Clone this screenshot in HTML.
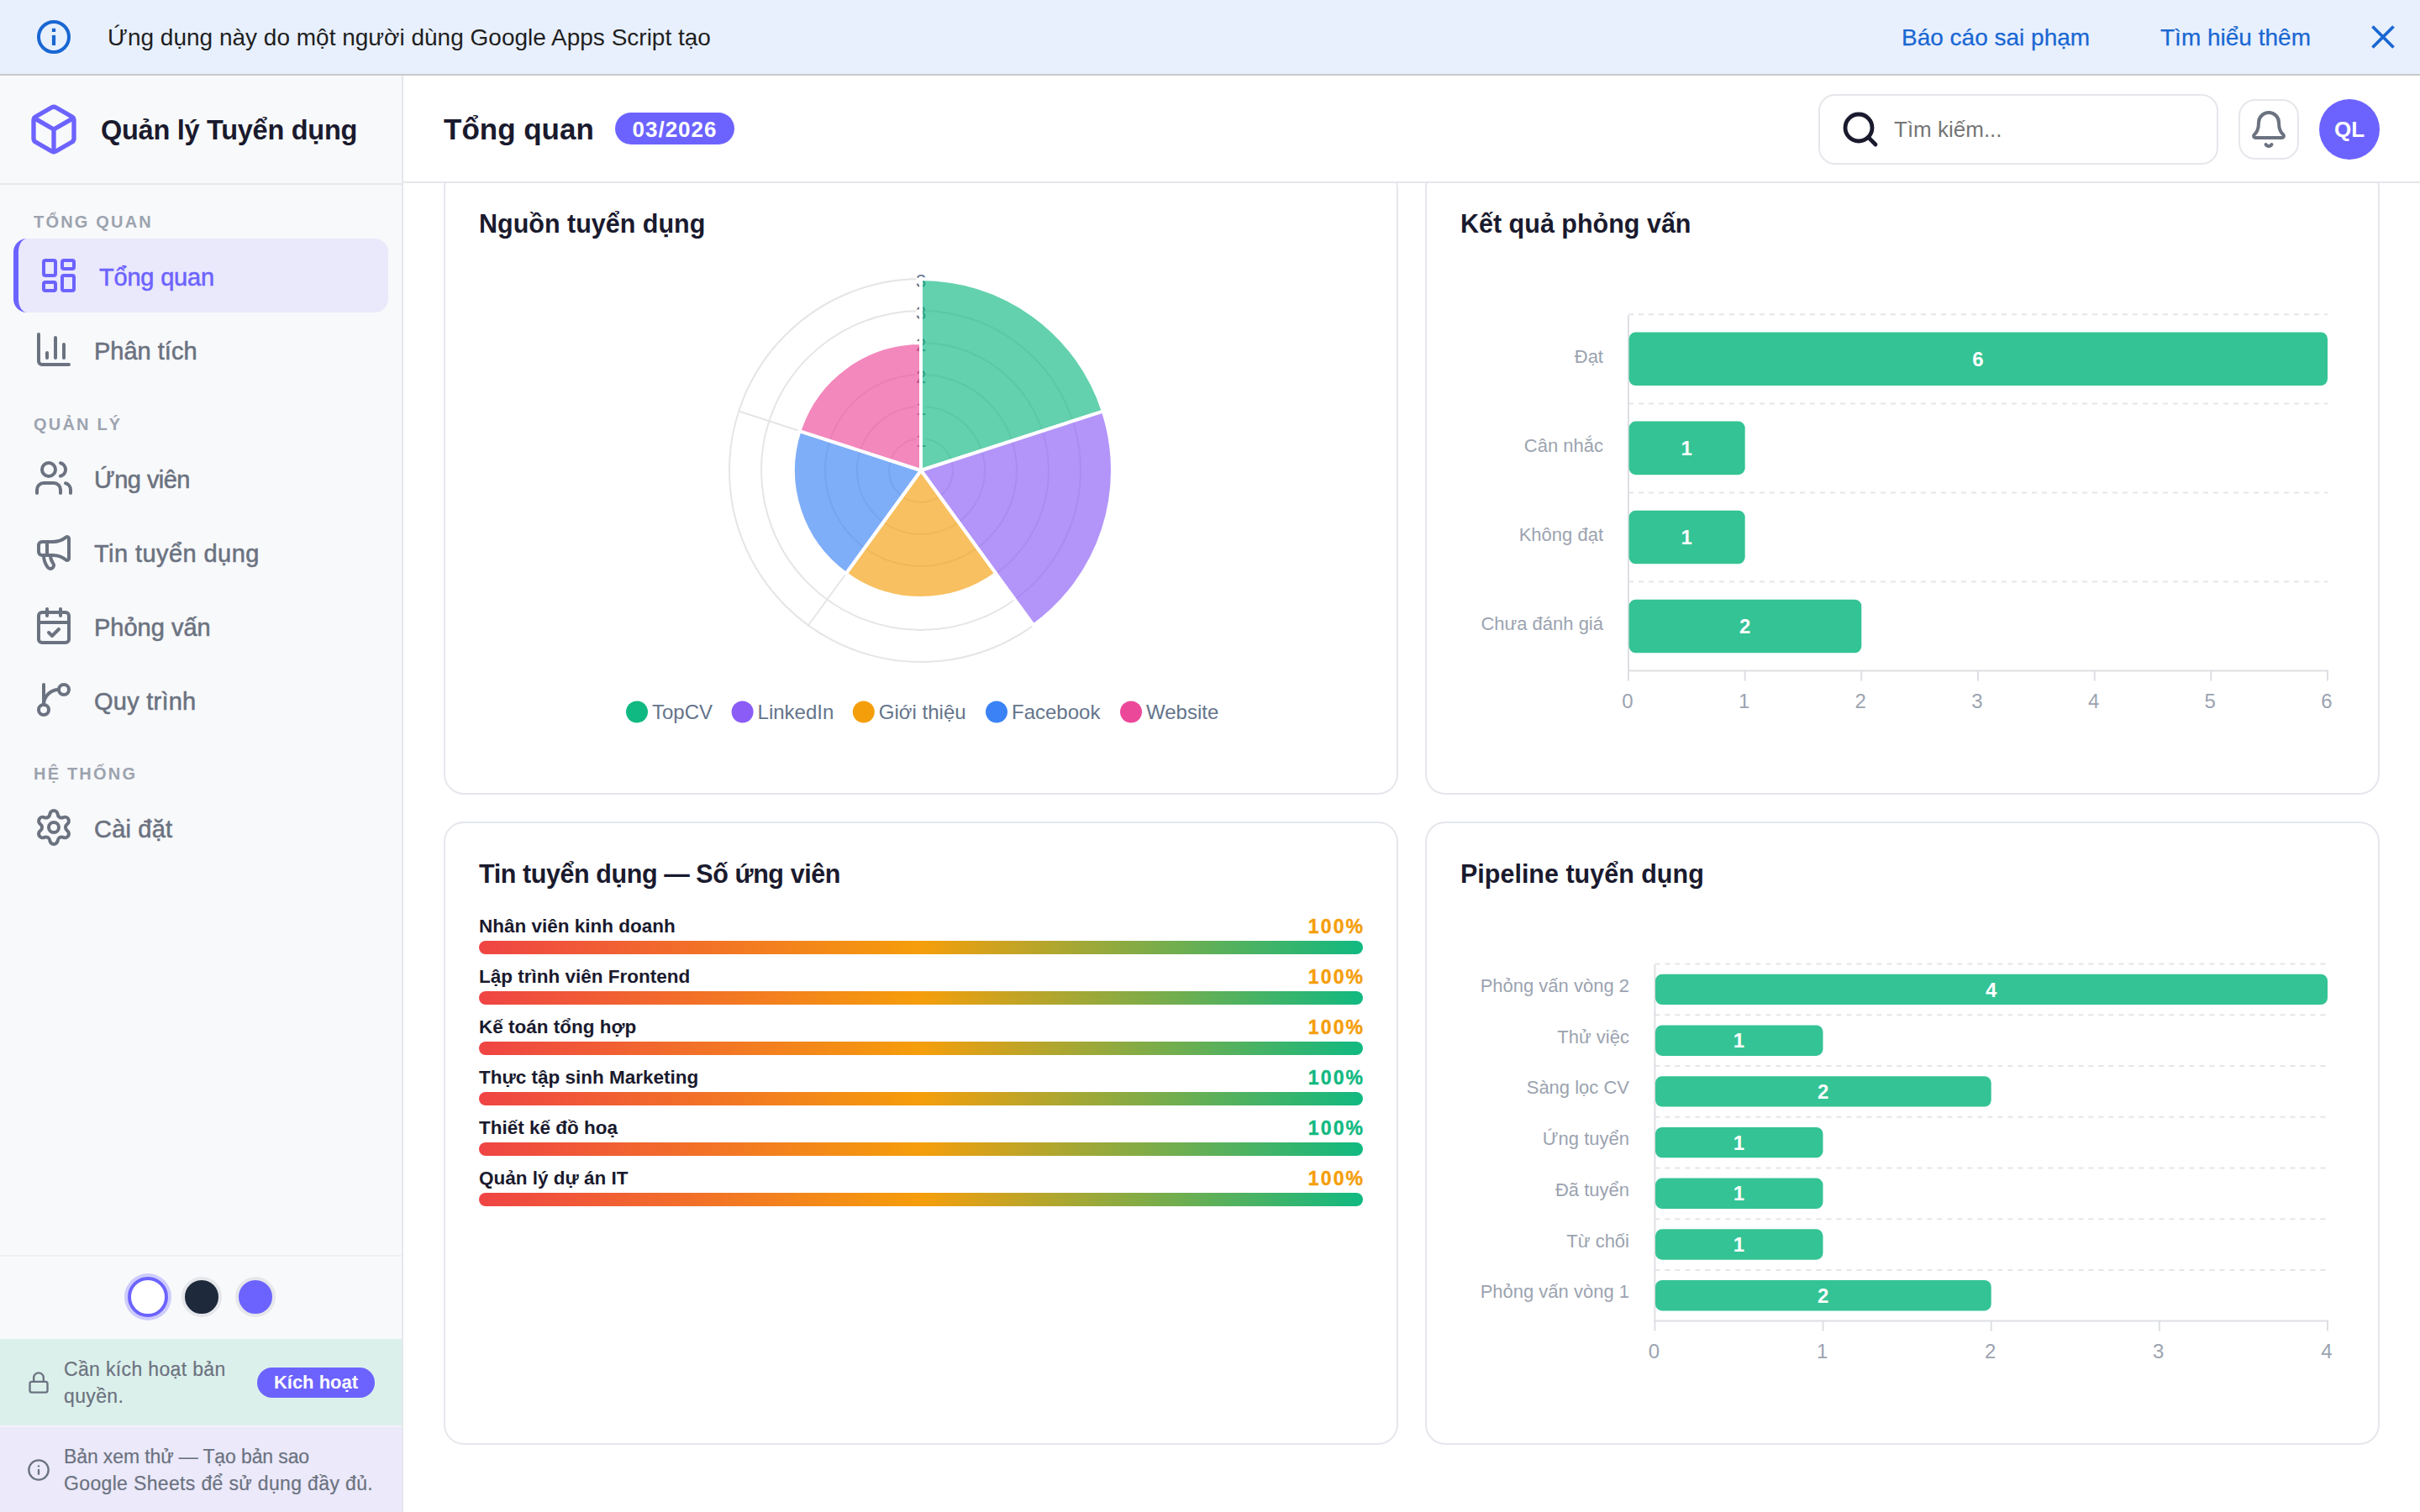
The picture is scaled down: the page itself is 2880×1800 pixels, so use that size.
<!DOCTYPE html>
<html lang="vi">
<head>
<meta charset="utf-8">
<title>Quản lý Tuyển dụng</title>
<style>
*{box-sizing:border-box;margin:0;padding:0}
html,body{width:2880px;height:1800px;overflow:hidden;background:#fff}
body{font-family:"Liberation Sans",sans-serif;color:#1a1a2e;position:relative}
.abs{position:absolute}
svg.ic{position:absolute;fill:none;stroke:currentColor;stroke-width:2;stroke-linecap:round;stroke-linejoin:round}
/* banner */
#banner{position:absolute;left:0;top:0;width:2880px;height:90px;background:#e8f0fe;border-bottom:2px solid #c9c9c9}
#banner .msg{position:absolute;left:128px;top:25px;font-size:28px;line-height:40px;color:#1f1f1f;white-space:nowrap}
#banner .lnk{position:absolute;top:25px;font-size:28px;line-height:40px;color:#1967d2;white-space:nowrap;-webkit-text-stroke:.25px #1967d2}
/* sidebar */
#side{position:absolute;left:0;top:90px;width:480px;height:1710px;background:#f8f9fb;border-right:2px solid #e5e7eb}
#side .hd{position:absolute;left:0;top:0;width:478px;height:130px;border-bottom:2px solid #e5e7eb}
#side .brand{position:absolute;left:120px;top:43px;letter-spacing:-.27px;font-size:32.5px;line-height:44px;font-weight:700;color:#1a1a2e;white-space:nowrap}
.sec{position:absolute;left:40px;font-size:20px;line-height:24px;font-weight:700;letter-spacing:2.2px;color:#9ca3af;white-space:nowrap}
.nav{position:absolute;left:16px;width:446px;height:88px;color:#6b7280;font-size:29px;line-height:88px;white-space:nowrap}
.nav span{position:absolute;left:96px;top:2px}
.nav svg.ic{left:24px;top:20px;width:48px;height:48px}
.nav.on{background:#eae8fb;border-radius:16px;border-left:6px solid #6c63ff;color:#6c63ff}

.nav span{letter-spacing:0;-webkit-text-stroke:.55px currentColor}
#side .sep{position:absolute;left:0;top:1404px;width:478px;height:2px;background:#eef0f3}
.dot{position:absolute;top:1430px;width:48px;height:48px;border-radius:50%;border:4px solid #e5e7eb}
#lic{position:absolute;left:0;top:1504px;width:478px;height:103px;background:#dcf0eb}
#demo{position:absolute;left:0;top:1607px;width:478px;height:103px;background:#ebe9fa;border-top:2px solid #f3f2fc}
.small{position:absolute;left:76px;font-size:23px;line-height:32px;color:#6b7280;letter-spacing:.35px;-webkit-text-stroke:.2px currentColor;white-space:nowrap}
#lic .btn{position:absolute;left:306px;top:34px;width:140px;height:36px;border-radius:18px;background:#6c63ff;color:#fff;font-weight:700;font-size:22px;line-height:36px;text-align:center;white-space:nowrap}
/* header */
#head{position:absolute;left:480px;top:90px;width:2400px;height:128px;background:#fff;border-bottom:2px solid #e5e7eb}
#head h1{position:absolute;left:48px;top:40px;font-size:35px;line-height:48px;font-weight:700;color:#1a1a2e;white-space:nowrap}
#head .badge{position:absolute;left:252px;top:44px;width:142px;height:38px;border-radius:19px;background:#6c63ff;color:#fff;font-weight:700;font-size:26px;line-height:40px;text-align:center;letter-spacing:1px;white-space:nowrap}

#search{position:absolute;left:1684px;top:22px;width:476px;height:84px;border:2px solid #e5e7eb;border-radius:20px;background:#fff}
#search span{position:absolute;left:88px;top:22px;font-size:26px;line-height:36px;color:#757575;white-space:nowrap}
#bell{position:absolute;left:2184px;top:28px;width:72px;height:72px;border:2px solid #e5e7eb;border-radius:20px;background:#fff;color:#6b7280}
#ava{position:absolute;left:2280px;top:28px;width:72px;height:72px;border-radius:50%;background:#6c63ff;color:#fff;font-weight:700;font-size:26px;line-height:72px;text-align:center}
/* cards */
.card{position:absolute;width:1136px;background:#fff;border:2px solid #e5e7ec;border-radius:24px}
.card h3{position:absolute;left:40px;font-size:30.5px;line-height:40px;font-weight:700;color:#1a1a2e;white-space:nowrap}

.pr{position:absolute;left:40px;width:1052px;height:60px}
.pr b{position:absolute;left:0;top:-6px;font-size:22.5px;line-height:30px;font-weight:700;color:#1a1a2e;white-space:nowrap}
.pr i{-webkit-text-stroke:.4px currentColor;position:absolute;right:0;top:-6px;font-size:23px;line-height:30px;font-weight:700;font-style:normal;color:#f59e0b;white-space:nowrap;letter-spacing:2.1px;margin-right:-2.1px}
.pr i.g{color:#10b981}
.pr u{position:absolute;left:0;top:26px;width:1052px;height:16px;border-radius:8px;background:linear-gradient(90deg,#ef4444 0%,#f59e0b 50%,#10b981 100%)}
</style>
</head>
<body>

<!-- main cards -->
<div class="card" id="c1" style="left:528px;top:200px;height:746px"><h3 style="top:44px">Nguồn tuyển dụng</h3></div>
<div class="card" id="c2" style="left:1696px;top:200px;height:746px"><h3 style="top:44px">Kết quả phỏng vấn</h3></div>
<div class="card" id="c3" style="left:528px;top:978px;height:742px"><h3 style="top:40px;letter-spacing:-.42px">Tin tuyển dụng — Số ứng viên</h3><div class="pr" style="top:114px"><b>Nhân viên kinh doanh</b><i>100%</i><u></u></div><div class="pr" style="top:174px"><b>Lập trình viên Frontend</b><i>100%</i><u></u></div><div class="pr" style="top:234px"><b>Kế toán tổng hợp</b><i>100%</i><u></u></div><div class="pr" style="top:294px"><b>Thực tập sinh Marketing</b><i class=g>100%</i><u></u></div><div class="pr" style="top:354px"><b>Thiết kế đồ hoạ</b><i class=g>100%</i><u></u></div><div class="pr" style="top:414px"><b>Quản lý dự án IT</b><i>100%</i><u></u></div></div>
<div class="card" id="c4" style="left:1696px;top:978px;height:742px"><h3 style="top:40px">Pipeline tuyển dụng</h3></div>

<svg id="charts" class="abs" style="left:0;top:0;width:2880px;height:1800px" viewBox="0 0 2880 1800" font-family="Liberation Sans, sans-serif">
<g fill="none" stroke="#e5e5e5" stroke-width="2">
<circle cx="1096.0" cy="560.0" r="38.0"/>
<circle cx="1096.0" cy="560.0" r="76.0"/>
<circle cx="1096.0" cy="560.0" r="114.0"/>
<circle cx="1096.0" cy="560.0" r="152.0"/>
<circle cx="1096.0" cy="560.0" r="190.0"/>
<circle cx="1096.0" cy="560.0" r="228.0"/>
<path d="M1096.0 560.0L1096.0 332.0"/>
<path d="M1096.0 560.0L1312.8 489.5"/>
<path d="M1096.0 560.0L1230.0 744.5"/>
<path d="M1096.0 560.0L962.0 744.5"/>
<path d="M1096.0 560.0L879.2 489.5"/>
</g>
<g font-size="22" fill="#64748b" text-anchor="middle">
<rect x="1090.4" y="511.0" width="10.8" height="24" fill="#fff" stroke="none"/><text x="1096.0" y="532.2">1</text>
<rect x="1090.4" y="473.0" width="10.8" height="24" fill="#fff" stroke="none"/><text x="1096.0" y="494.2">1</text>
<rect x="1090.4" y="435.0" width="10.8" height="24" fill="#fff" stroke="none"/><text x="1096.0" y="456.2">2</text>
<rect x="1090.4" y="397.0" width="10.8" height="24" fill="#fff" stroke="none"/><text x="1096.0" y="418.2">2</text>
<rect x="1090.4" y="359.0" width="10.8" height="24" fill="#fff" stroke="none"/><text x="1096.0" y="380.2">3</text>
<rect x="1090.4" y="321.0" width="10.8" height="24" fill="#fff" stroke="none"/><text x="1096.0" y="342.2">3</text>
</g>
<g stroke="#fff" stroke-width="4" stroke-linejoin="round">
<path d="M1096.0 560.0L1096.00 332.00A228.0 228.0 0 0 1 1312.84 489.54Z" fill="rgba(16,185,129,.65)"/>
<path d="M1096.0 560.0L1312.84 489.54A228.0 228.0 0 0 1 1230.02 744.46Z" fill="rgba(139,92,246,.65)"/>
<path d="M1096.0 560.0L1185.34 682.97A152.0 152.0 0 0 1 1006.66 682.97Z" fill="rgba(245,158,11,.65)"/>
<path d="M1096.0 560.0L1006.66 682.97A152.0 152.0 0 0 1 951.44 513.03Z" fill="rgba(59,130,246,.65)"/>
<path d="M1096.0 560.0L951.44 513.03A152.0 152.0 0 0 1 1096.00 408.00Z" fill="rgba(236,72,153,.65)"/>
</g>
<g font-size="24" fill="#64748b">
<circle cx="758" cy="847.5" r="13" fill="#10b981"/><text x="776" y="856">TopCV</text>
<circle cx="883.6" cy="847.5" r="13" fill="#8b5cf6"/><text x="901.6" y="856">LinkedIn</text>
<circle cx="1027.8" cy="847.5" r="13" fill="#f59e0b"/><text x="1045.8" y="856">Giới thiệu</text>
<circle cx="1186" cy="847.5" r="13" fill="#3b82f6"/><text x="1204" y="856">Facebook</text>
<circle cx="1346" cy="847.5" r="13" fill="#ec4899"/><text x="1364" y="856">Website</text>
</g>
<g stroke="#e4e6e9" stroke-width="2" stroke-dasharray="6 6">
<path d="M1938 374.3H2770"/>
<path d="M1938 480.4H2770"/>
<path d="M1938 586.5H2770"/>
<path d="M1938 692.5H2770"/>
</g>
<g stroke="#dddfe3" stroke-width="2" fill="none">
<path d="M1938 375.3V810.6"/>
<path d="M1937 798.6H2771"/>
<path d="M2076.7 798.6v12"/>
<path d="M2215.3 798.6v12"/>
<path d="M2354.0 798.6v12"/>
<path d="M2492.7 798.6v12"/>
<path d="M2631.3 798.6v12"/>
<path d="M2770.0 798.6v12"/>
</g>
<g fill="#34c394">
<rect x="1938.6" y="395.5" width="831.4" height="63.6" rx="8"/>
<rect x="1938.6" y="501.6" width="138.1" height="63.6" rx="8"/>
<rect x="1938.6" y="607.7" width="138.1" height="63.6" rx="8"/>
<rect x="1938.6" y="713.7" width="276.7" height="63.6" rx="8"/>
</g>
<g font-size="24" font-weight="700" fill="#fff" text-anchor="middle">
<text x="2354.0" y="435.9">6</text>
<text x="2007.3" y="542.0">1</text>
<text x="2007.3" y="648.1">1</text>
<text x="2076.7" y="754.2">2</text>
</g>
<g font-size="22" fill="#9ba3b0" text-anchor="end">
<text x="1908" y="432.0">Đạt</text>
<text x="1908" y="538.1">Cân nhắc</text>
<text x="1908" y="644.2">Không đạt</text>
<text x="1908" y="750.3">Chưa đánh giá</text>
</g>
<g font-size="24" fill="#9ba3b0" text-anchor="middle">
<text x="1937.0" y="843.3">0</text>
<text x="2075.7" y="843.3">1</text>
<text x="2214.3" y="843.3">2</text>
<text x="2353.0" y="843.3">3</text>
<text x="2491.7" y="843.3">4</text>
<text x="2630.3" y="843.3">5</text>
<text x="2769.0" y="843.3">6</text>
</g>
<g stroke="#e4e6e9" stroke-width="2" stroke-dasharray="6 6">
<path d="M1969.4 1147.6H2770"/>
<path d="M1969.4 1208.3H2770"/>
<path d="M1969.4 1269.0H2770"/>
<path d="M1969.4 1329.7H2770"/>
<path d="M1969.4 1390.5H2770"/>
<path d="M1969.4 1451.2H2770"/>
<path d="M1969.4 1511.9H2770"/>
</g>
<g stroke="#dddfe3" stroke-width="2" fill="none">
<path d="M1969.4 1148.6V1584.6"/>
<path d="M1968.4 1572.6H2771"/>
<path d="M2169.6 1572.6v12"/>
<path d="M2369.7 1572.6v12"/>
<path d="M2569.8 1572.6v12"/>
<path d="M2770.0 1572.6v12"/>
</g>
<g fill="#34c394">
<rect x="1970.0" y="1159.7" width="800.0" height="36.4" rx="8"/>
<rect x="1970.0" y="1220.5" width="199.5" height="36.4" rx="8"/>
<rect x="1970.0" y="1281.2" width="399.7" height="36.4" rx="8"/>
<rect x="1970.0" y="1341.9" width="199.5" height="36.4" rx="8"/>
<rect x="1970.0" y="1402.6" width="199.5" height="36.4" rx="8"/>
<rect x="1970.0" y="1463.3" width="199.5" height="36.4" rx="8"/>
<rect x="1970.0" y="1524.0" width="399.7" height="36.4" rx="8"/>
</g>
<g font-size="24" font-weight="700" fill="#fff" text-anchor="middle">
<text x="2369.7" y="1186.6">4</text>
<text x="2069.5" y="1247.3">1</text>
<text x="2169.6" y="1308.0">2</text>
<text x="2069.5" y="1368.7">1</text>
<text x="2069.5" y="1429.4">1</text>
<text x="2069.5" y="1490.1">1</text>
<text x="2169.6" y="1550.8">2</text>
</g>
<g font-size="22" fill="#9ba3b0" text-anchor="end">
<text x="1939" y="1181.0">Phỏng vấn vòng 2</text>
<text x="1939" y="1241.7">Thử việc</text>
<text x="1939" y="1302.4">Sàng lọc CV</text>
<text x="1939" y="1363.1">Ứng tuyển</text>
<text x="1939" y="1423.8">Đã tuyển</text>
<text x="1939" y="1484.5">Từ chối</text>
<text x="1939" y="1545.2">Phỏng vấn vòng 1</text>
</g>
<g font-size="24" fill="#9ba3b0" text-anchor="middle">
<text x="1968.4" y="1617.4">0</text>
<text x="2168.6" y="1617.4">1</text>
<text x="2368.7" y="1617.4">2</text>
<text x="2568.8" y="1617.4">3</text>
<text x="2769.0" y="1617.4">4</text>
</g>
</svg>

<!-- header -->
<div id="head">
  <h1>Tổng quan</h1>
  <div class="badge">03/2026</div>
  <div id="search"><svg class="ic" viewBox="0 0 24 24" style="left:24px;top:16px;width:48px;height:48px;color:#1a1a2e;stroke-width:2.4"><circle cx="11" cy="11" r="8"/><path d="m21 21-4.3-4.3"/></svg><span>Tìm kiếm...</span></div>
  <div id="bell"><svg class="ic" viewBox="0 0 24 24" style="left:10px;top:10px;width:48px;height:48px"><path d="M10.268 21a2 2 0 0 0 3.464 0"/><path d="M3.262 15.326A1 1 0 0 0 4 17h16a1 1 0 0 0 .74-1.673C19.41 13.956 18 12.499 18 8A6 6 0 0 0 6 8c0 4.499-1.411 5.956-2.738 7.326"/></svg></div>
  <div id="ava">QL</div>
</div>

<!-- sidebar -->
<div id="side">
  <div class="hd">
    <svg class="ic" viewBox="0 0 24 24" style="left:32px;top:32px;width:64px;height:64px;color:#6c63ff"><path d="M21 8a2 2 0 0 0-1-1.73l-7-4a2 2 0 0 0-2 0l-7 4A2 2 0 0 0 3 8v8a2 2 0 0 0 1 1.73l7 4a2 2 0 0 0 2 0l7-4A2 2 0 0 0 21 16Z"/><path d="m3.3 7 8.7 5 8.7-5"/><path d="M12 22V12"/></svg>
    <div class="brand">Quản lý Tuyển dụng</div>
  </div>
  <div class="sec" style="top:162.3px">TỔNG QUAN</div>
  <div class="nav on" style="top:194px"><svg class="ic" viewBox="0 0 24 24"><rect width="7" height="9" x="3" y="3" rx="1"/><rect width="7" height="5" x="14" y="3" rx="1"/><rect width="7" height="9" x="14" y="12" rx="1"/><rect width="7" height="5" x="3" y="16" rx="1"/></svg><span style="letter-spacing:-.2px">Tổng quan</span></div>
  <div class="nav" style="top:282px"><svg class="ic" viewBox="0 0 24 24"><path d="M3 3v16a2 2 0 0 0 2 2h16"/><path d="M18 17V9"/><path d="M13 17V5"/><path d="M8 17v-3"/></svg><span>Phân tích</span></div>
  <div class="sec" style="top:402.8px">QUẢN LÝ</div>
  <div class="nav" style="top:434.5px"><svg class="ic" viewBox="0 0 24 24"><path d="M16 21v-2a4 4 0 0 0-4-4H6a4 4 0 0 0-4 4v2"/><circle cx="9" cy="7" r="4"/><path d="M22 21v-2a4 4 0 0 0-3-3.87"/><path d="M16 3.13a4 4 0 0 1 0 7.75"/></svg><span style="letter-spacing:-.55px">Ứng viên</span></div>
  <div class="nav" style="top:522.5px"><svg class="ic" viewBox="0 0 24 24"><path d="M11 6a13 13 0 0 0 8.4-2.8A1 1 0 0 1 21 4v12a1 1 0 0 1-1.6.8A13 13 0 0 0 11 14H5a2 2 0 0 1-2-2V8a2 2 0 0 1 2-2z"/><path d="M6 14a12 12 0 0 0 2.4 7.2 2 2 0 0 0 3.2-2.4A8 8 0 0 1 10 14"/><path d="M8 6v8"/></svg><span style="letter-spacing:.43px">Tin tuyển dụng</span></div>
  <div class="nav" style="top:610.5px"><svg class="ic" viewBox="0 0 24 24"><path d="M8 2v4"/><path d="M16 2v4"/><rect width="18" height="18" x="3" y="4" rx="2"/><path d="M3 10h18"/><path d="m9 16 2 2 4-4"/></svg><span>Phỏng vấn</span></div>
  <div class="nav" style="top:698.5px"><svg class="ic" viewBox="0 0 24 24"><path d="M15 6a9 9 0 0 0-9 9V3"/><circle cx="18" cy="6" r="3"/><circle cx="6" cy="18" r="3"/></svg><span style="letter-spacing:.24px">Quy trình</span></div>
  <div class="sec" style="top:818.8px">HỆ THỐNG</div>
  <div class="nav" style="top:850.5px"><svg class="ic" viewBox="0 0 24 24"><path d="M9.671 4.136a2.34 2.34 0 0 1 4.659 0 2.34 2.34 0 0 0 3.319 1.915 2.34 2.34 0 0 1 2.33 4.033 2.34 2.34 0 0 0 0 3.831 2.34 2.34 0 0 1-2.33 4.033 2.34 2.34 0 0 0-3.319 1.915 2.34 2.34 0 0 1-4.659 0 2.34 2.34 0 0 0-3.32-1.915 2.34 2.34 0 0 1-2.33-4.033 2.34 2.34 0 0 0 0-3.831A2.34 2.34 0 0 1 6.35 6.051a2.34 2.34 0 0 0 3.319-1.915"/><circle cx="12" cy="12" r="3"/></svg><span style="letter-spacing:.2px">Cài đặt</span></div>
  <div class="sep"></div>
  <div class="dot" style="left:152px;background:#fff;border-color:#6c63ff;box-shadow:0 0 0 4px rgba(108,99,255,.3)"></div>
  <div class="dot" style="left:216px;background:#1e293b"></div>
  <div class="dot" style="left:280px;background:#6c63ff"></div>
  <div id="lic">
    <svg class="ic" viewBox="0 0 24 24" style="left:32px;top:38px;width:28px;height:28px;color:#6b7280"><rect width="18" height="11" x="3" y="11" rx="2" ry="2"/><path d="M7 11V7a5 5 0 0 1 10 0v4"/></svg>
    <div class="small" style="top:20px">Cần kích hoạt bản<br>quyền.</div>
    <div class="btn">Kích hoạt</div>
  </div>
  <div id="demo">
    <svg class="ic" viewBox="0 0 24 24" style="left:32px;top:37px;width:28px;height:28px;color:#6b7280"><circle cx="12" cy="12" r="10"/><path d="M12 16v-4"/><path d="M12 8h.01"/></svg>
    <div class="small" style="top:19px"><span style="letter-spacing:-.12px">Bản xem thử — Tạo bản sao</span><br>Google Sheets để sử dụng đầy đủ.</div>
  </div>
</div>

<!-- banner -->
<div id="banner">
  <svg class="abs" viewBox="0 0 44 44" style="left:42px;top:22px;width:44px;height:44px"><circle cx="22" cy="22" r="18" fill="none" stroke="#1967d2" stroke-width="4"/><rect x="19.9" y="19.9" width="4.2" height="12.1" fill="#1967d2"/><rect x="19.9" y="11.8" width="4.2" height="4.2" fill="#1967d2"/></svg>
  <svg class="abs" viewBox="0 0 32 32" style="left:2820px;top:27.5px;width:32px;height:32px"><path d="M3.5 3.5 28.5 28.5M28.5 3.5 3.5 28.5" fill="none" stroke="#1967d2" stroke-width="3.8"/></svg>
  <div class="msg">Ứng dụng này do một người dùng Google Apps Script tạo</div>
  <div class="lnk" style="left:2263px">Báo cáo sai phạm</div>
  <div class="lnk" style="left:2571px">Tìm hiểu thêm</div>
</div>

</body>
</html>
